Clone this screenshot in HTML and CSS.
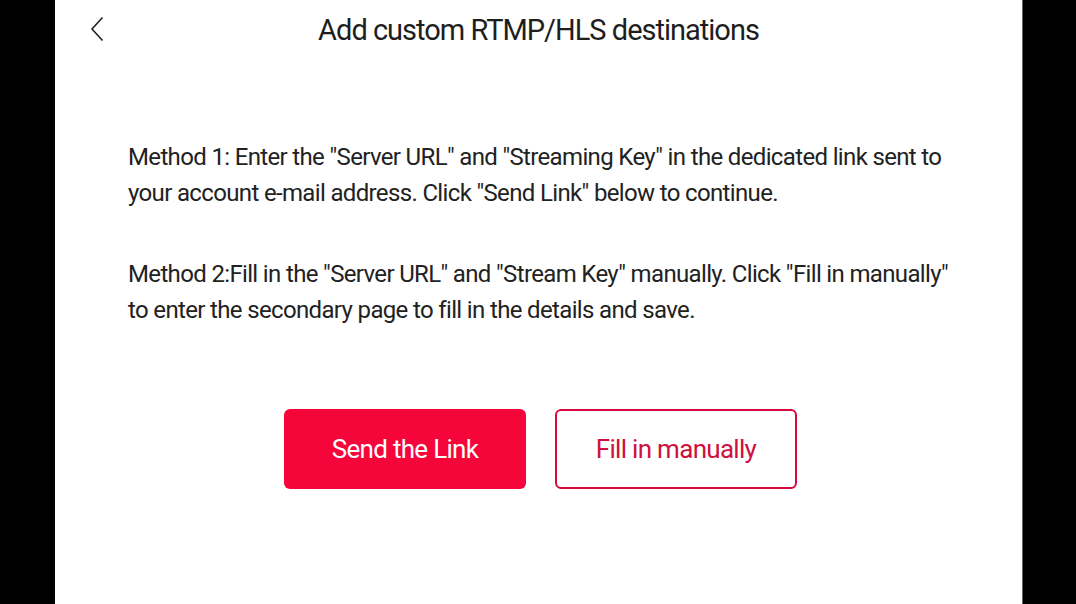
FILE: index.html
```html
<!DOCTYPE html>
<html lang="en">
<head>
    <meta charset="UTF-8">
    <meta name="viewport" content="width=device-width, initial-scale=1.0">
    <title>Add custom RTMP/HLS destinations</title>
    <link rel="stylesheet" href="styles.css">
</head>
<body>
    <div class="panel">
        <div class="header">
            <button class="back-button" aria-label="Back">
                <svg width="14" height="26" viewBox="0 0 14 26">
                    <path d="M12.5 1.5 L2 13 L12.5 24.5" fill="none" stroke="#222" stroke-width="1.6"/>
                </svg>
            </button>
            <h1>Add custom RTMP/HLS destinations</h1>
        </div>

        <div class="content">
            <p>Method 1: Enter the "Server URL" and "Streaming Key" in the dedicated link sent to<br>your account e-mail address. Click "Send Link" below to continue.</p>
            <p>Method 2:Fill in the "Server URL" and "Stream Key" manually. Click "Fill in manually"<br>to enter the secondary page to fill in the details and save.</p>
        </div>

        <div class="actions">
            <button class="btn btn-primary">Send the Link</button>
            <button class="btn btn-outline">Fill in manually</button>
        </div>
    </div>
</body>
</html>
```

FILE: styles.css
```css
body {
    margin: 0;
    background-color: #000;
    font-family: "Roboto", "Liberation Sans", sans-serif;
    color: #222;
}

.panel {
    width: 967px;
    height: 604px;
    margin-left: 55px;
    background-color: #fff;
    border-right: 1px solid #666;
}

.header {
    display: flex;
    align-items: center;
    justify-content: center;
    height: 60px;
    position: relative;
}

.back-button {
    position: absolute;
    left: 35px;
    top: 16px;
    padding: 0;
    border: none;
    background: none;
    cursor: pointer;
}

.header h1 {
    margin: 0;
    font-size: 29px;
    font-weight: normal;
    letter-spacing: -1px;
    color: #1e1e1e;
}

.content {
    padding: 79px 72px 0 73px;
}

.content p {
    margin: 0 0 45px;
    font-size: 24px;
    line-height: 36px;
    letter-spacing: -0.65px;
    white-space: nowrap;
}

.content p:last-child {
    margin-bottom: 0;
}

.actions {
    display: flex;
    justify-content: center;
    gap: 29px;
    margin-top: 81px;
    padding-left: 4px;
}

.btn {
    width: 242px;
    height: 80px;
    border-radius: 6px;
    font-family: inherit;
    font-size: 26px;
    letter-spacing: -0.7px;
    cursor: pointer;
}

.btn-primary {
    background-color: #f5053a;
    border: none;
    color: #fff;
}

.btn-outline {
    background-color: #fff;
    border: 2px solid #d8093e;
    color: #cf1040;
}
```
